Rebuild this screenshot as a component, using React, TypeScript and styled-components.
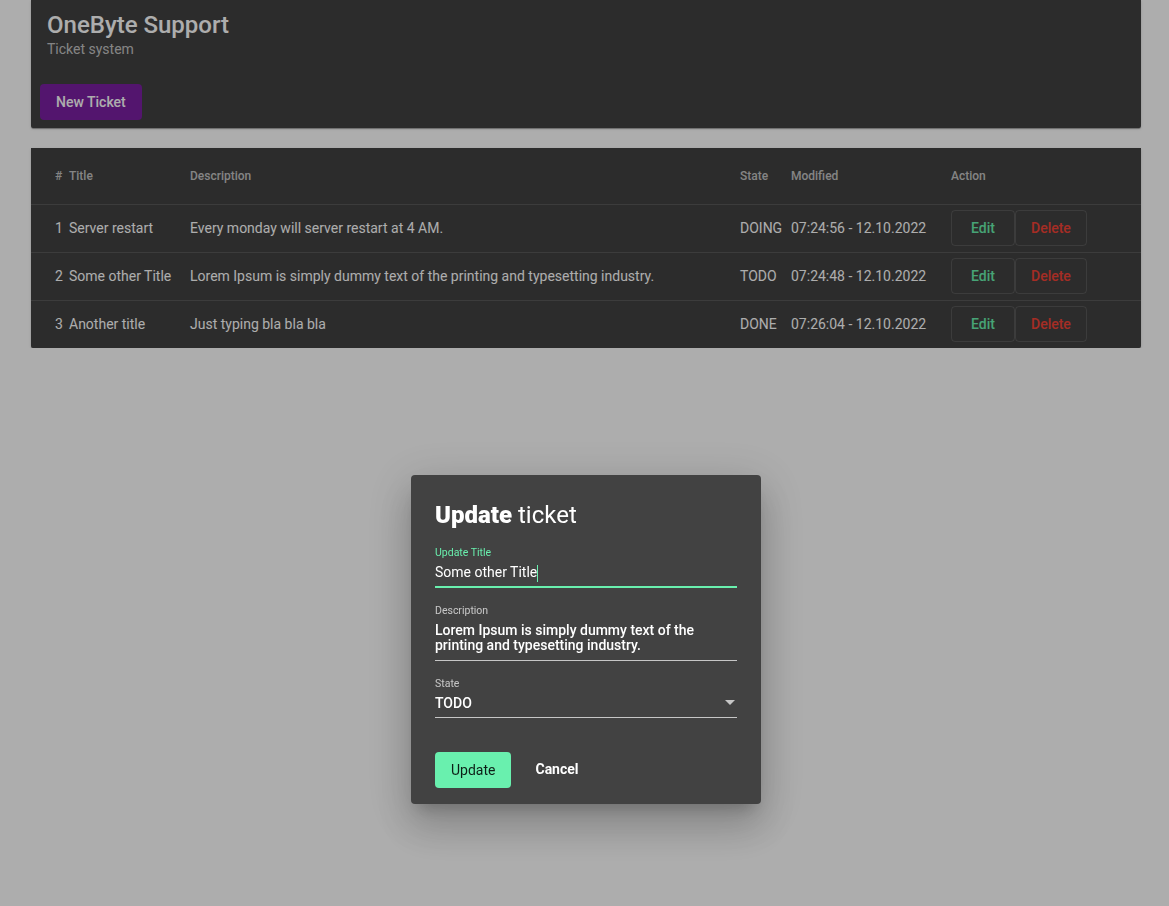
import React from "react";
import styled, { createGlobalStyle } from "styled-components";

const Global = createGlobalStyle`
  html, body { margin: 0; padding: 0; background: #ffffff; }
  body { font-family: Roboto, "Noto Sans", sans-serif; color: #fff; }
  * { box-sizing: border-box; }
`;

const Page = styled.div`
  width: 1110px;
  margin: 0 0 0 31px;
  display: flex;
  flex-direction: column;
  gap: 20px;
`;

const Card = styled.section`
  background: #424242;
  border-radius: 0 0 2px 2px;
  box-shadow: 0 2px 1px -1px rgba(0,0,0,.2), 0 1px 1px 0 rgba(0,0,0,.14), 0 1px 3px 0 rgba(0,0,0,.12);
`;

const HeaderCard = styled(Card)`
  padding: 11px 16px 8px 16px;
  display: flex;
  flex-direction: column;
`;

const AppTitle = styled.h1`
  margin: 0;
  font-size: 24px;
  line-height: 28px;
  font-weight: 500;
  color: #ffffff;
`;

const SubTitle = styled.div`
  font-size: 14px;
  line-height: 20px;
  color: rgba(255,255,255,0.7);
`;

const PrimaryButton = styled.button`
  margin: 25px 0 0 -7px;
  align-self: flex-start;
  height: 36px;
  min-width: 64px;
  padding: 0 16px;
  border: none;
  border-radius: 4px;
  background: #7b1fa2;
  color: #ffffff;
  font-family: Roboto, sans-serif;
  font-size: 14px;
  font-weight: 500;
`;

const TableCard = styled(Card)`
  display: flex;
  flex-direction: column;
`;

const cols = "14px 121px 550px 51px 160px 1fr";

const HeadRow = styled.div`
  display: grid;
  grid-template-columns: ${cols};
  align-items: center;
  height: 57px;
  padding: 0 24px 1px 24px;
  border-bottom: 1px solid rgba(255,255,255,0.12);
  font-size: 12px;
  font-weight: 500;
  color: rgba(255,255,255,0.7);
`;

const Row = styled.div<{ $last?: boolean }>`
  display: grid;
  grid-template-columns: ${cols};
  align-items: center;
  height: ${(p) => (p.$last ? 47 : 48)}px;
  padding: 0 24px 2px 24px;
  border-bottom: ${(p) => (p.$last ? "none" : "1px solid rgba(255,255,255,0.12)")};
  font-size: 14px;
  color: #ffffff;
`;

const Cell = styled.div`
  white-space: nowrap;
`;

const Actions = styled.div`
  display: flex;
  gap: 0;
`;

const OutlineButton = styled.button<{ $tone: string }>`
  height: 36px;
  min-width: 64px;
  padding: 0 15px;
  background: transparent;
  border: 1px solid rgba(255,255,255,0.12);
  border-radius: 4px;
  color: ${(p) => p.$tone};
  font-family: Roboto, sans-serif;
  font-size: 14px;
  font-weight: 500;
`;

const Overlay = styled.div`
  position: fixed;
  inset: 0;
  background: rgba(0,0,0,0.32);
  display: flex;
  justify-content: center;
  align-items: flex-start;
  padding: 475px 0 0 3px;
`;

const Dialog = styled.div`
  width: 350px;
  background: #424242;
  border-radius: 4px;
  padding: 24px 24px 16px 24px;
  box-shadow: 0 11px 15px -7px rgba(0,0,0,.2), 0 24px 38px 3px rgba(0,0,0,.14), 0 9px 46px 8px rgba(0,0,0,.12);
  display: flex;
  flex-direction: column;
`;

const DialogTitle = styled.h2`
  margin: 0 0 15px 0;
  font-size: 24px;
  line-height: 32px;
  font-weight: 400;
  color: #ffffff;
  b { font-weight: 900; }
`;

const Field = styled.div<{ $gap: number }>`
  display: flex;
  flex-direction: column;
  margin-bottom: ${(p) => p.$gap}px;
`;

const Label = styled.label<{ $active?: boolean }>`
  font-size: 10.5px;
  line-height: 13px;
  color: ${(p) => (p.$active ? "#69f0ae" : "rgba(255,255,255,0.7)")};
`;

const Value = styled.div<{ $weight?: number; $lh?: number; $top: number; $bottom: number }>`
  font-size: 14px;
  line-height: ${(p) => p.$lh ?? 18}px;
  font-weight: ${(p) => p.$weight ?? 400};
  color: #ffffff;
  margin-top: ${(p) => p.$top}px;
  padding-bottom: ${(p) => p.$bottom}px;
  display: flex;
  align-items: center;
  justify-content: space-between;
`;

const Underline = styled.div<{ $active?: boolean }>`
  height: ${(p) => (p.$active ? 2 : 1)}px;
  background: ${(p) => (p.$active ? "#69f0ae" : "rgba(255,255,255,0.7)")};
`;

const Caret = styled.span`
  display: inline-block;
  width: 1px;
  height: 17px;
  background: #69f0ae;
  vertical-align: middle;
`;

const Arrow = styled.span`
  width: 0;
  height: 0;
  border-left: 5px solid transparent;
  border-right: 5px solid transparent;
  border-top: 5px solid rgba(255,255,255,0.7);
  margin-right: 2px;
`;

const DialogActions = styled.div`
  display: flex;
  align-items: center;
  gap: 8px;
`;

const AccentButton = styled.button`
  height: 36px;
  min-width: 64px;
  padding: 0 16px;
  border: none;
  border-radius: 4px;
  background: #69f0ae;
  color: rgba(0,0,0,0.87);
  font-family: Roboto, sans-serif;
  font-size: 14px;
  font-weight: 400;
`;

const TextButton = styled.button`
  height: 36px;
  min-width: 64px;
  padding: 0 16px 2px 16px;
  border: none;
  background: transparent;
  color: #ffffff;
  font-family: Roboto, sans-serif;
  font-size: 14px;
  font-weight: 700;
`;

const tickets = [
  { id: 1, title: "Server restart", desc: "Every monday will server restart at 4 AM.", state: "DOING", mod: "07:24:56 - 12.10.2022" },
  { id: 2, title: "Some other Title", desc: "Lorem Ipsum is simply dummy text of the printing and typesetting industry.", state: "TODO", mod: "07:24:48 - 12.10.2022" },
  { id: 3, title: "Another title", desc: "Just typing bla bla bla", state: "DONE", mod: "07:26:04 - 12.10.2022" },
];

export default function App() {
  return (
    <>
      <Global />
      <Page>
        <HeaderCard>
          <AppTitle>OneByte Support</AppTitle>
          <SubTitle>Ticket system</SubTitle>
          <PrimaryButton>New Ticket</PrimaryButton>
        </HeaderCard>
        <TableCard>
          <HeadRow>
            <Cell>#</Cell>
            <Cell>Title</Cell>
            <Cell>Description</Cell>
            <Cell>State</Cell>
            <Cell>Modified</Cell>
            <Cell>Action</Cell>
          </HeadRow>
          {tickets.map((t, i) => (
            <Row key={t.id} $last={i === tickets.length - 1}>
              <Cell>{t.id}</Cell>
              <Cell>{t.title}</Cell>
              <Cell>{t.desc}</Cell>
              <Cell>{t.state}</Cell>
              <Cell>{t.mod}</Cell>
              <Actions>
                <OutlineButton $tone="#69f0ae">Edit</OutlineButton>
                <OutlineButton $tone="#f44336">Delete</OutlineButton>
              </Actions>
            </Row>
          ))}
        </TableCard>
      </Page>
      <Overlay>
        <Dialog>
          <DialogTitle>
            <b>Update</b> ticket
          </DialogTitle>
          <Field $gap={16}>
            <Label $active>Update Title</Label>
            <Value $top={4} $bottom={4}>
              <span>
                Some other Title
                <Caret />
              </span>
            </Value>
            <Underline $active />
          </Field>
          <Field $gap={16}>
            <Label>Description</Label>
            <Value $top={6} $lh={15} $weight={500} $bottom={7}>
              Lorem Ipsum is simply dummy text of the printing and typesetting industry.
            </Value>
            <Underline />
          </Field>
          <Field $gap={34}>
            <Label>State</Label>
            <Value $top={4} $weight={500} $bottom={5}>
              <span>TODO</span>
              <Arrow />
            </Value>
            <Underline />
          </Field>
          <DialogActions>
            <AccentButton>Update</AccentButton>
            <TextButton>Cancel</TextButton>
          </DialogActions>
        </Dialog>
      </Overlay>
    </>
  );
}
